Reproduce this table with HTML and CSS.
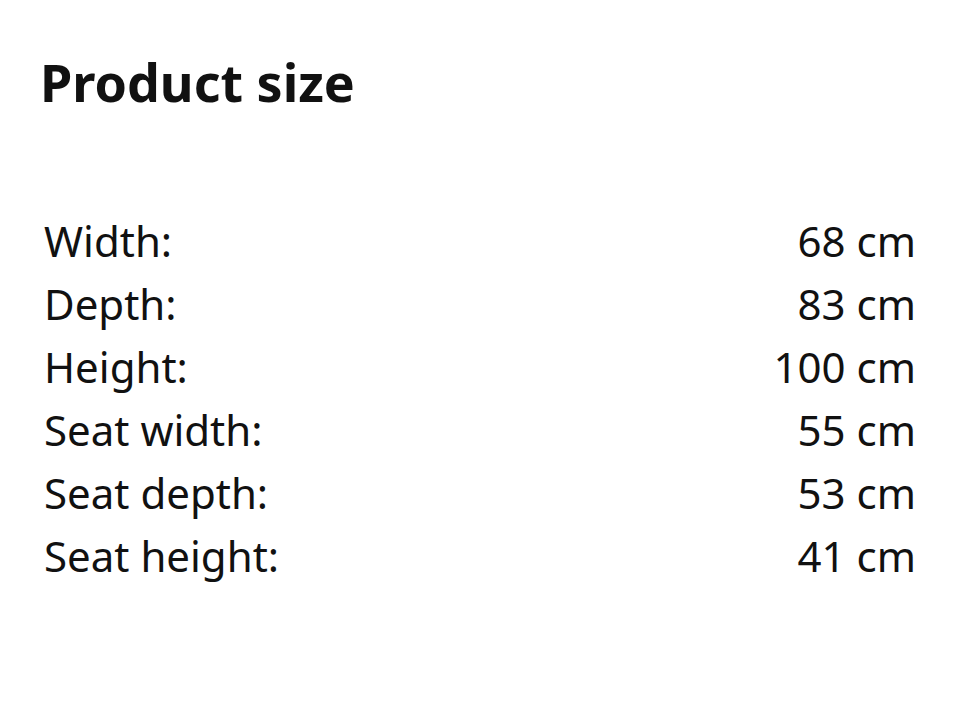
FILE: index.html
```html
<!DOCTYPE html>
<html>
<head>
<meta charset="utf-8">
<link rel="stylesheet" href="styles.css">
</head>
<body>
<section class="product-size">
  <h2 class="title">Product size</h2>
  <dl class="dims">
    <div class="row"><dt>Width:</dt><dd>68 cm</dd></div>
    <div class="row"><dt>Depth:</dt><dd>83 cm</dd></div>
    <div class="row"><dt>Height:</dt><dd>100 cm</dd></div>
    <div class="row"><dt>Seat width:</dt><dd>55 cm</dd></div>
    <div class="row"><dt>Seat depth:</dt><dd>53 cm</dd></div>
    <div class="row"><dt>Seat height:</dt><dd>41 cm</dd></div>
  </dl>
</section>
</body>
</html>
```
FILE: styles.css
```css
html, body {
  margin: 0;
  padding: 0;
  background: #fff;
}
body {
  font-family: "Noto Sans", "Open Sans", sans-serif;
  color: #111;
}
.product-size {
  padding: 46px 45px 0 40px;
}
.title {
  margin: 0;
  font-size: 52px;
  font-weight: 700;
  line-height: 72px;
}
.dims {
  margin: 91px 0 0 4px;
}
.row {
  display: flex;
  justify-content: space-between;
  font-size: 42px;
  line-height: 63px;
}
.row dt, .row dd {
  margin: 0;
}
.row dd {
  margin-right: -2px;
}
```
